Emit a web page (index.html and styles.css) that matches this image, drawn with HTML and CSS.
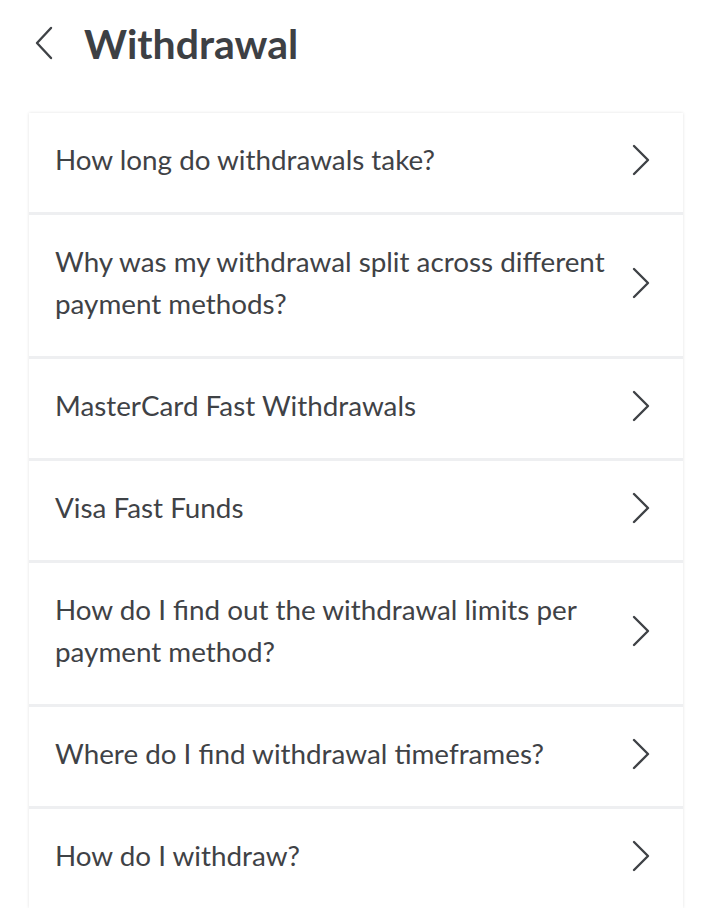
FILE: index.html
```html
<!DOCTYPE html>
<html>
<head>
<meta charset="utf-8">
<link rel="stylesheet" href="styles.css">
</head>
<body>
<header class="header">
  <svg class="back" width="20" height="34" viewBox="0 0 20 34"><path d="M17 2 L3 17 L17 32" fill="none" stroke="#3f4246" stroke-width="2.4" stroke-linecap="round" stroke-linejoin="round"/></svg>
  <h1 class="title">Withdrawal</h1>
</header>
<div class="card">
  <div class="row"><span class="label">How long do withdrawals take?</span><svg class="chev" width="20" height="32" viewBox="0 0 20 32"><path d="M3 2 L17 16 L3 30" fill="none" stroke="#3f4246" stroke-width="2.4" stroke-linecap="round" stroke-linejoin="round"/></svg></div>
  <div class="row"><span class="label">Why was my withdrawal split across different payment methods?</span><svg class="chev" width="20" height="32" viewBox="0 0 20 32"><path d="M3 2 L17 16 L3 30" fill="none" stroke="#3f4246" stroke-width="2.4" stroke-linecap="round" stroke-linejoin="round"/></svg></div>
  <div class="row"><span class="label">MasterCard Fast Withdrawals</span><svg class="chev" width="20" height="32" viewBox="0 0 20 32"><path d="M3 2 L17 16 L3 30" fill="none" stroke="#3f4246" stroke-width="2.4" stroke-linecap="round" stroke-linejoin="round"/></svg></div>
  <div class="row"><span class="label">Visa Fast Funds</span><svg class="chev" width="20" height="32" viewBox="0 0 20 32"><path d="M3 2 L17 16 L3 30" fill="none" stroke="#3f4246" stroke-width="2.4" stroke-linecap="round" stroke-linejoin="round"/></svg></div>
  <div class="row"><span class="label">How do I find out the withdrawal limits per payment method?</span><svg class="chev" width="20" height="32" viewBox="0 0 20 32"><path d="M3 2 L17 16 L3 30" fill="none" stroke="#3f4246" stroke-width="2.4" stroke-linecap="round" stroke-linejoin="round"/></svg></div>
  <div class="row"><span class="label">Where do I find withdrawal timeframes?</span><svg class="chev" width="20" height="32" viewBox="0 0 20 32"><path d="M3 2 L17 16 L3 30" fill="none" stroke="#3f4246" stroke-width="2.4" stroke-linecap="round" stroke-linejoin="round"/></svg></div>
  <div class="row"><span class="label">How do I withdraw?</span><svg class="chev" width="20" height="32" viewBox="0 0 20 32"><path d="M3 2 L17 16 L3 30" fill="none" stroke="#3f4246" stroke-width="2.4" stroke-linecap="round" stroke-linejoin="round"/></svg></div>
</div>
</body>
</html>
```
FILE: styles.css
```css
html, body {
  margin: 0;
  padding: 0;
  background: #ffffff;
  font-family: Lato, "Noto Sans", sans-serif;
  color: #3f4246;
}
.header {
  display: flex;
  align-items: center;
  height: 86px;
  padding-left: 34px;
  gap: 30px;
}
.back {
  display: block;
}
.title {
  margin: 0;
  font-size: 41px;
  font-weight: 700;
  color: #3d4044;
  line-height: 1;
}
.card {
  margin: 27px 31px 0 29px;
  background: #eeeff1;
  display: flex;
  flex-direction: column;
  gap: 3px;
  box-shadow: 0 0 3px rgba(0,0,0,0.12);
}
.row {
  background: #ffffff;
  display: flex;
  align-items: center;
  justify-content: space-between;
  padding: 26px 32px 31px 26px;
  min-height: 42px;
}
.label {
  font-size: 27.8px;
  line-height: 42px;
  color: #3f4246;
  max-width: 570px;
}
.chev {
  flex: none;
  display: block;
  margin-left: 10px;
}
```
